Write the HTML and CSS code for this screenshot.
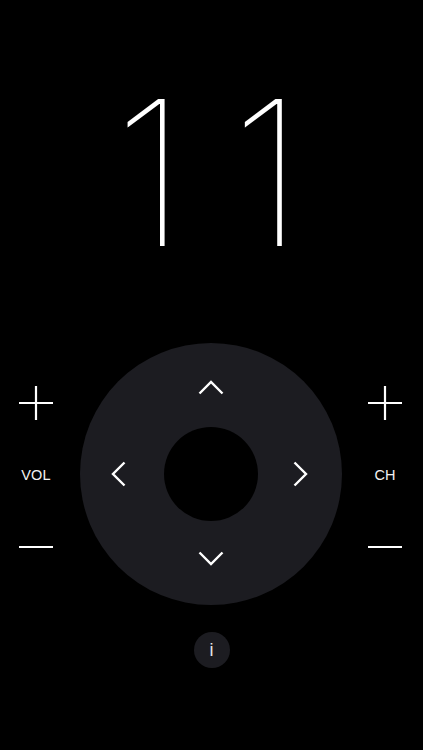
FILE: index.html
```html
<!DOCTYPE html>
<html>
<head>
<meta charset="utf-8">
<link rel="stylesheet" href="styles.css">
</head>
<body>
<main class="remote">
  <div class="channel"><span class="digit">1</span><span class="digit">1</span></div>

  <section class="controls">
    <div class="side side-left">
      <button class="btn-sign" aria-label="Volume up">
        <svg viewBox="0 0 34 34" width="34" height="34"><path d="M0 17H34M17 0V34" stroke="#fff" stroke-width="2.2" fill="none"/></svg>
      </button>
      <span class="side-label">VOL</span>
      <button class="btn-sign" aria-label="Volume down">
        <svg viewBox="0 0 34 34" width="34" height="34"><path d="M0 17H34" stroke="#fff" stroke-width="2.2" fill="none"/></svg>
      </button>
    </div>

    <div class="dpad">
      <div class="dp-up">
        <svg viewBox="0 0 26 15" width="26" height="15"><path d="M1.5 13.5L13 2L24.5 13.5" stroke="#fff" stroke-width="2.4" fill="none"/></svg>
      </div>
      <div class="dp-left">
        <svg viewBox="0 0 15 26" width="15" height="26"><path d="M13.5 1.5L2 13L13.5 24.5" stroke="#fff" stroke-width="2.4" fill="none"/></svg>
      </div>
      <div class="dp-ok"></div>
      <div class="dp-right">
        <svg viewBox="0 0 15 26" width="15" height="26"><path d="M1.5 1.5L13 13L1.5 24.5" stroke="#fff" stroke-width="2.4" fill="none"/></svg>
      </div>
      <div class="dp-down">
        <svg viewBox="0 0 26 15" width="26" height="15"><path d="M1.5 1.5L13 13L24.5 1.5" stroke="#fff" stroke-width="2.4" fill="none"/></svg>
      </div>
    </div>

    <div class="side side-right">
      <button class="btn-sign" aria-label="Channel up">
        <svg viewBox="0 0 34 34" width="34" height="34"><path d="M0 17H34M17 0V34" stroke="#fff" stroke-width="2.2" fill="none"/></svg>
      </button>
      <span class="side-label">CH</span>
      <button class="btn-sign" aria-label="Channel down">
        <svg viewBox="0 0 34 34" width="34" height="34"><path d="M0 17H34" stroke="#fff" stroke-width="2.2" fill="none"/></svg>
      </button>
    </div>
  </section>

  <div class="info-row"><button class="info">i</button></div>
</main>
</body>
</html>
```
FILE: styles.css
```css
html, body {
  margin: 0;
  padding: 0;
  background: #000;
  height: 100%;
}
body {
  color: #fff;
  font-family: "Liberation Sans", Arial, sans-serif;
}
.remote {
  display: flex;
  flex-direction: column;
  width: 423px;
}
.channel {
  display: flex;
  justify-content: center;
  gap: 43px;
  padding-top: 72px;
  padding-right: 5px;
  height: 202px;
  font-family: Inter, "Liberation Sans", sans-serif;
  font-weight: 100;
  font-size: 202px;
  line-height: 202px;
}
.digit {
  display: block;
}
.controls {
  display: flex;
  margin-top: 69px;
  height: 262px;
}
.side {
  display: flex;
  flex-direction: column;
  align-items: center;
  gap: 38px;
  padding-top: 43px;
}
.side-left {
  width: 72px;
  margin-right: 8px;
}
.side-right {
  width: 76px;
  margin-left: 5px;
}
.btn-sign {
  width: 34px;
  height: 34px;
  padding: 0;
  border: 0;
  background: none;
  display: flex;
  align-items: center;
  justify-content: center;
}
.btn-sign svg { display: block; }
.side-label {
  height: 34px;
  display: flex;
  align-items: center;
  font-size: 14.5px;
  color: #f2f2f2;
  letter-spacing: 0.1px;
}
.dpad {
  width: 262px;
  height: 262px;
  border-radius: 50%;
  background: #1c1c21;
  display: grid;
  grid-template-columns: 84px 94px 84px;
  grid-template-rows: 84px 94px 84px;
  grid-template-areas:
    ". up ."
    "left ok right"
    ". down .";
}
.dpad > div {
  display: flex;
  align-items: center;
  justify-content: center;
}
.dp-up { grid-area: up; padding-top: 5px; }
.dp-down { grid-area: down; padding-bottom: 9px; }
.dp-left { grid-area: left; padding-right: 8px; }
.dp-right { grid-area: right; padding-left: 1px; }
.dp-ok {
  grid-area: ok;
  border-radius: 50%;
  background: #000;
}
.info-row {
  display: flex;
  justify-content: center;
  margin-top: 27px;
}
.info {
  width: 36px;
  height: 36px;
  border-radius: 50%;
  border: 0;
  padding: 0;
  background: #1c1c21;
  color: #e6e6e6;
  font-family: "Liberation Sans", Arial, sans-serif;
  font-size: 18px;
  line-height: 36px;
  text-align: center;
}
```
